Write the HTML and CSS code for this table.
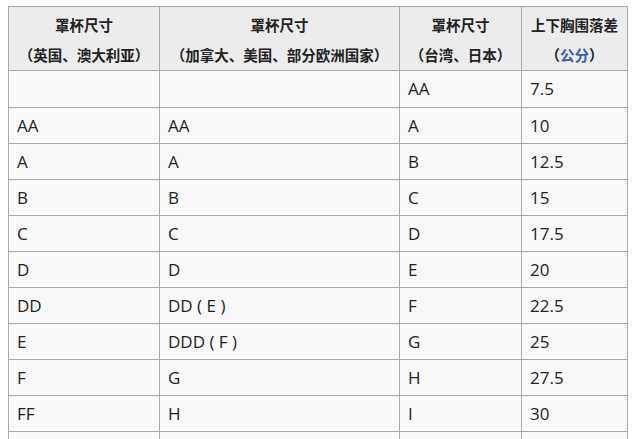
FILE: index.html
```html
<!DOCTYPE html>
<html lang="zh-CN">
<head>
<meta charset="utf-8">
<link rel="stylesheet" href="styles.css">
</head>
<body>
<div class="page">
<table class="cups">
  <colgroup>
    <col class="c1"><col class="c2"><col class="c3"><col class="c4">
  </colgroup>
  <thead>
    <tr>
      <th>罩杯尺寸<br>（英国、澳大利亚）</th>
      <th>罩杯尺寸<br>（加拿大、美国、部分欧洲国家）</th>
      <th>罩杯尺寸<br>（台湾、日本）</th>
      <th>上下胸围落差<br>（<span class="link">公分</span>）</th>
    </tr>
  </thead>
  <tbody>
    <tr class="first-row"><td></td><td></td><td>AA</td><td>7.5</td></tr>
    <tr><td>AA</td><td>AA</td><td>A</td><td>10</td></tr>
    <tr><td>A</td><td>A</td><td>B</td><td>12.5</td></tr>
    <tr><td>B</td><td>B</td><td>C</td><td>15</td></tr>
    <tr><td>C</td><td>C</td><td>D</td><td>17.5</td></tr>
    <tr><td>D</td><td>D</td><td>E</td><td>20</td></tr>
    <tr><td>DD</td><td>DD&nbsp;( E )</td><td>F</td><td>22.5</td></tr>
    <tr><td>E</td><td>DDD&nbsp;( F )</td><td>G</td><td>25</td></tr>
    <tr><td>F</td><td>G</td><td>H</td><td>27.5</td></tr>
    <tr><td>FF</td><td>H</td><td>I</td><td>30</td></tr>
    <tr><td></td><td></td><td></td><td></td></tr>
  </tbody>
</table>
</div>
</body>
</html>
```

FILE: styles.css
```css
html, body {
  margin: 0;
  padding: 0;
  background: #ffffff;
}

.page {
  padding: 6px 0 0 8px;
  height: 439px;
  overflow: hidden;
  box-sizing: border-box;
}

.cups {
  border-collapse: collapse;
  table-layout: fixed;
  width: 619px;
  color: #222222;
  font-family: "Open Sans", "Noto Sans CJK SC", sans-serif;
}

.c1 { width: 151px; }
.c2 { width: 240px; }
.c3 { width: 122px; }
.c4 { width: 106px; }

.cups th,
.cups td {
  border: 1px solid #a9a9ab;
}

.cups th {
  background: #ececec;
  font-family: "Noto Sans CJK SC", sans-serif;
  font-weight: 700;
  font-size: 14.5px;
  line-height: 30px;
  padding: 3px 4px 0;
  text-align: center;
  vertical-align: top;
  height: 60px;
  box-sizing: content-box;
}

.cups td {
  background: #faf9fa;
  font-size: 17px;
  line-height: 35px;
  height: 35px;
  padding: 0 8px;
  text-align: left;
  white-space: nowrap;
}

.cups .first-row td {
  line-height: 36px;
  height: 36px;
}

.link {
  color: #2f5fbf;
}
```
